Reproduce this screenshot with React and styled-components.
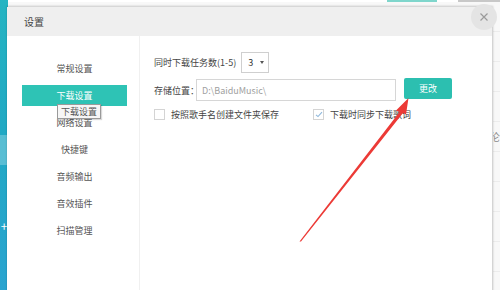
import React from 'react';
import styled, { createGlobalStyle } from 'styled-components';

const GlobalStyle = createGlobalStyle`
  html, body {
    margin: 0;
    padding: 0;
    background: #fff;
  }
  body {
    font-family: "Noto Sans CJK SC", "Noto Sans", sans-serif;
  }
`;

const Screen = styled.div`
  position: relative;
  width: 500px;
  height: 290px;
  overflow: hidden;
  display: flex;
  background: #f8f8f8;
`;

const SideStrip = styled.div`
  width: 8px;
  flex-shrink: 0;
  background: linear-gradient(180deg, #24b4c2 0%, #21a9c4 45%, #2aa4d0 100%);
  display: flex;
  flex-direction: column;
  align-items: center;
`;

const StripPatch = styled.div`
  margin-top: 135px;
  width: 100%;
  height: 30px;
  background: rgba(255, 255, 255, 0.25);
`;

const StripPlus = styled.div`
  margin-top: 55px;
  color: #fff;
  font-size: 12px;
  line-height: 12px;
`;

const AppMain = styled.div`
  flex: 1;
  display: flex;
  flex-direction: column;
`;

const TopBar = styled.div`
  height: 6px;
  display: flex;
  background: #fff;
  padding-left: 379px;
  gap: 21px;
`;

const TopButton = styled.div`
  width: ${p => p.w}px;
  height: 2px;
  background: ${p => p.color};
`;

const ListRow = styled.div`
  height: 29px;
  flex-shrink: 0;
  border-bottom: 1px solid #ececec;
  display: flex;
  align-items: center;
  justify-content: flex-end;
  font-size: 10px;
  color: #888;
`;

const Dialog = styled.div`
  position: absolute;
  top: 7px;
  left: 7px;
  width: 485px;
  height: 300px;
  background: #fff;
  border-right: 1px solid #d4d4d4;
  box-shadow: 0 -1px 2px rgba(0, 0, 0, 0.2);
  display: flex;
  flex-direction: column;
`;

const Header = styled.div`
  position: relative;
  height: 29px;
  flex-shrink: 0;
  background: #efefef;
  display: flex;
  align-items: center;
  padding-left: 17px;
  font-size: 10px;
  color: #444;
`;

const CloseButton = styled.div`
  position: absolute;
  right: -5px;
  top: -3px;
  width: 26px;
  height: 26px;
  border-radius: 50%;
  background: #e4e4e4;
  display: flex;
  align-items: center;
  justify-content: center;
`;

const Body = styled.div`
  flex: 1;
  display: flex;
`;

const Sidebar = styled.div`
  width: 133px;
  flex-shrink: 0;
  border-right: 1px solid #f0f0f0;
  padding: 22px 0 0 15px;
  box-sizing: border-box;
  display: flex;
  flex-direction: column;
  gap: 6px;
`;

const MenuItem = styled.div`
  position: relative;
  width: 105px;
  height: 21px;
  display: flex;
  align-items: center;
  justify-content: center;
  font-size: 9px;
  color: ${p => (p.active ? '#fff' : '#555')};
  background: ${p => (p.active ? '#2ec3b5' : 'transparent')};
`;

const Tooltip = styled.div`
  position: absolute;
  left: 35px;
  top: 19px;
  padding: 0 3px;
  height: 13px;
  line-height: 13px;
  background: #f6f6f6;
  border: 1px solid #9a9a9a;
  box-shadow: 1px 1px 1px rgba(0, 0, 0, 0.15);
  font-size: 9px;
  color: #555;
  z-index: 2;
`;

const Content = styled.div`
  flex: 1;
  padding: 15px 0 0 14px;
  display: flex;
  flex-direction: column;
  font-size: 9px;
  color: #444;
`;

const Row = styled.div`
  display: flex;
  align-items: center;
  height: ${p => p.h}px;
  margin-bottom: ${p => p.mb || 0}px;
`;

const Label = styled.span`
  margin-right: ${p => p.mr}px;
  white-space: nowrap;
`;

const Select = styled.div`
  width: 28px;
  height: 21px;
  box-sizing: border-box;
  border: 1px solid #cfcfcf;
  display: flex;
  align-items: center;
  justify-content: space-between;
  padding: 0 4px 0 6px;
  font-size: 9px;
  color: #333;
`;

const Caret = styled.span`
  width: 0;
  height: 0;
  border-left: 2.5px solid transparent;
  border-right: 2.5px solid transparent;
  border-top: 3px solid #555;
`;

const PathInput = styled.div`
  width: 200px;
  height: 22px;
  box-sizing: border-box;
  border: 1px solid #d6d6d6;
  display: flex;
  align-items: center;
  padding-left: 5px;
  color: #a0a0a0;
  font-size: 9px;
`;

const ChangeButton = styled.div`
  margin-left: 8px;
  margin-top: -3px;
  width: 48px;
  height: 21px;
  border-radius: 2px;
  background: #2cbfb0;
  color: #fff;
  font-size: 9px;
  display: flex;
  align-items: center;
  justify-content: center;
`;

const CheckItem = styled.div`
  display: flex;
  align-items: center;
  gap: 6px;
  width: ${p => p.w}px;
`;

const Box = styled.div`
  width: 11px;
  height: 11px;
  box-sizing: border-box;
  border: 1px solid #d4d4d4;
  background: #fff;
  display: flex;
  align-items: center;
  justify-content: center;
`;

const ArrowLayer = styled.svg`
  position: absolute;
  left: 0;
  top: 0;
  pointer-events: none;
`;

const menu = ['常规设置', '下载设置', '网络设置', '快捷键', '音频输出', '音效插件', '扫描管理'];

export default function App() {
  return (
    <>
      <GlobalStyle />
      <Screen>
        <SideStrip>
          <StripPatch />
          <StripPlus>+</StripPlus>
        </SideStrip>
        <AppMain>
          <TopBar>
            <TopButton w={50} color="#7fd6cc" />
            <TopButton w={42} color="#c8c8c8" />
          </TopBar>
          {Array.from({ length: 10 }).map((_, i) => (
            <ListRow key={i}>{i === 4 ? '伦' : ''}</ListRow>
          ))}
        </AppMain>

        <Dialog>
          <Header>
            设置
            <CloseButton>
              <svg width="10" height="10" viewBox="0 0 10 10">
                <path d="M1.5 1.5 L8.5 8.5 M8.5 1.5 L1.5 8.5" stroke="#9a9a9a" strokeWidth="1.2" />
              </svg>
            </CloseButton>
          </Header>
          <Body>
            <Sidebar>
              {menu.map(m => (
                <MenuItem key={m} active={m === '下载设置'}>
                  {m}
                  {m === '下载设置' && <Tooltip>下载设置</Tooltip>}
                </MenuItem>
              ))}
            </Sidebar>
            <Content>
              <Row h={22} mb={6}>
                <Label mr={5}>同时下载任务数(1-5)</Label>
                <Select>
                  3<Caret />
                </Select>
              </Row>
              <Row h={22} mb={6}>
                <Label mr={-3}>存储位置：</Label>
                <PathInput>D:\BaiduMusic\</PathInput>
                <ChangeButton>更改</ChangeButton>
              </Row>
              <Row h={14}>
                <CheckItem w={159}>
                  <Box />
                  <span>按照歌手名创建文件夹保存</span>
                </CheckItem>
                <CheckItem w={160}>
                  <Box>
                    <svg width="8" height="7" viewBox="0 0 8 7">
                      <path d="M1 3.8 L3 5.6 L7 1.2" fill="none" stroke="#8fb8dc" strokeWidth="1.1" />
                    </svg>
                  </Box>
                  <span>下载时同步下载歌词</span>
                </CheckItem>
              </Row>
            </Content>
          </Body>
        </Dialog>

        <ArrowLayer width="500" height="290" viewBox="0 0 500 290">
          <polygon
            points="299.5,241.5 399.5,112 396,110.5 408.5,98 406,114.5 403,113 301,241.5"
            fill="#ec3a36"
          />
        </ArrowLayer>
      </Screen>
    </>
  );
}
